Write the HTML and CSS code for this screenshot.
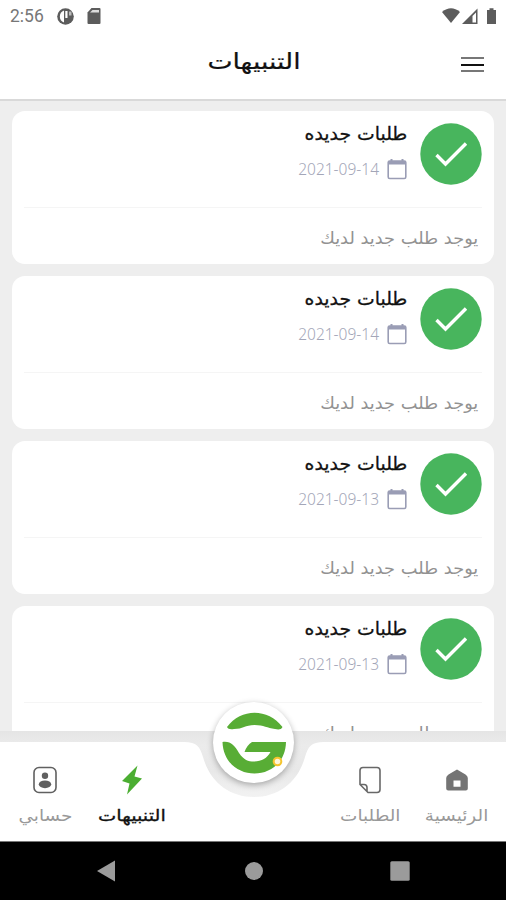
FILE: index.html
```html
<!DOCTYPE html>
<html lang="ar" dir="rtl">
  <head>
    <meta charset="UTF-8" />
    <meta name="viewport" content="width=device-width, initial-scale=1.0" />
    <title>التنبيهات</title>
    <link rel="stylesheet" href="styles.css">
  </head>
  <body>
    <!-- shared icons -->
    <svg class="defs" width="0" height="0">
      <symbol id="check" viewBox="0 0 62 62">
        <circle cx="31" cy="31" r="30.7" fill="#48b55d" />
        <path d="M16.500 32 L25.500 41 L46 20.500" fill="none" stroke="#fff" stroke-width="3.400" />
      </symbol>
      <symbol id="calendar" viewBox="0 0 20 22">
        <rect x="1.200" y="3" width="17.600" height="17.500" rx="1.500" fill="none" stroke="#9a9db5" stroke-width="1.600" />
        <path d="M1 3h18v3.500H1z M3.500 1h2v3h-2z M14.500 1h2v3h-2z" fill="#9a9db5" />
      </symbol>
    </svg>

    <div class="screen">
      <!-- status bar -->
      <div class="status" dir="ltr">
        <span class="clock">2:56</span>
        <svg class="status-app" width="17" height="17" viewBox="0 0 17 17">
          <circle cx="8.500" cy="8.500" r="8.300" fill="#5c5c5c" />
          <path d="M7 2.500C1.500 4 1.500 13 7 14.500z M8.300 3h2.200v7H8.300z" fill="#fff" />
          <path d="M12 3.500h2.500v4H12z" fill="#bbb" />
        </svg>
        <svg class="status-sd" width="14" height="16" viewBox="0 0 14 16">
          <path d="M4.500 0H12.500Q13.500 0 13.500 1V15Q13.500 16 12.500 16H1.500Q.5 16 .5 15V4.500z" fill="#5c5c5c" />
          <path d="M3 4.500 5.500 2H12v2.500z" fill="#ddd" />
        </svg>
        <svg class="status-signal" width="56" height="17" viewBox="0 0 56 17">
          <path d="M0 4Q9-3.500 18 4L9 15z" fill="#5c5c5c" />
          <path d="M20 16 35.500 .5V16z" fill="#5c5c5c" />
          <path d="M30.500 8 34 4.500V14.500H30.500z" fill="#fff" />
          <path d="M45 2h2.500V.3h4V2H54V16H45z" fill="#5c5c5c" />
        </svg>
      </div>

      <!-- header -->
      <div class="header">
        <h1>التنبيهات</h1>
        <div class="menu"><i></i><i></i><i></i></div>
      </div>

      <!-- notifications -->
      <div class="list">
        <div class="card">
          <div class="card-top">
            <svg class="check"><use href="#check" /></svg>
            <div class="info">
              <h2><span>طلبات جديده</span></h2>
              <div class="date"><svg><use href="#calendar" /></svg><span>2021-09-14</span></div>
            </div>
          </div>
          <p><span>يوجد طلب جديد لديك</span></p>
        </div>
        <div class="card">
          <div class="card-top">
            <svg class="check"><use href="#check" /></svg>
            <div class="info">
              <h2><span>طلبات جديده</span></h2>
              <div class="date"><svg><use href="#calendar" /></svg><span>2021-09-14</span></div>
            </div>
          </div>
          <p><span>يوجد طلب جديد لديك</span></p>
        </div>
        <div class="card">
          <div class="card-top">
            <svg class="check"><use href="#check" /></svg>
            <div class="info">
              <h2><span>طلبات جديده</span></h2>
              <div class="date"><svg><use href="#calendar" /></svg><span>2021-09-13</span></div>
            </div>
          </div>
          <p><span>يوجد طلب جديد لديك</span></p>
        </div>
        <div class="card">
          <div class="card-top">
            <svg class="check"><use href="#check" /></svg>
            <div class="info">
              <h2><span>طلبات جديده</span></h2>
              <div class="date"><svg><use href="#calendar" /></svg><span>2021-09-13</span></div>
            </div>
          </div>
          <p><span>يوجد طلب جديد لديك</span></p>
        </div>
      </div>

      <!-- bottom tabs -->
      <div class="tabs">
        <svg class="tabs-bg" width="506" height="110" viewBox="0 0 506 110">
          <path d="M0 11H184C197 11 200 16 203 26C210 51 229 66 254 66C279 66 298 51 305 26C308 16 311 11 324 11H506V110H0z" fill="#fff" />
        </svg>
        <div class="tab tab-home">
          <svg width="24" height="24" viewBox="0 0 24 24">
            <path d="M12 1.500 20.500 6.500Q22.800 8 22.800 10V20.500Q22.800 22.500 20.800 22.500H3.200Q1.200 22.500 1.200 20.500V10Q1.200 8 3.500 6.500z M8.500 12.500V18.800H15.500V12.500z" fill="#747474" fill-rule="evenodd" />
          </svg>
          <span>الرئيسية</span>
        </div>
        <div class="tab tab-orders">
          <svg width="24" height="28" viewBox="0 0 24 28">
            <path d="M5 1.500H19Q22 1.500 22 4.500V23.500Q22 26.500 19 26.500H10L2 18.500V4.500Q2 1.500 5 1.500z M2 18.500H6Q9 18.500 9 21.500V26" fill="none" stroke="#686868" stroke-width="1.600" />
          </svg>
          <span>الطلبات</span>
        </div>
        <div class="gap"></div>
        <div class="tab tab-alerts active">
          <svg width="22" height="30" viewBox="0 0 22 30">
            <path d="M16.500 .5 1 16 8.500 18.500 6 29.500 21 13.500 13.500 11.500z" fill="#4bae32" />
          </svg>
          <span>التنبيهات</span>
        </div>
        <div class="tab tab-account">
          <svg width="26" height="28" viewBox="0 0 26 28">
            <rect x="2" y="1.500" width="22" height="25" rx="5" fill="none" stroke="#606060" stroke-width="1.600" />
            <circle cx="13" cy="9.800" r="3.200" fill="#606060" />
            <ellipse cx="13" cy="18.300" rx="6.200" ry="3.900" fill="#606060" />
          </svg>
          <span>حسابي</span>
        </div>
        <div class="logo">
          <svg width="66" height="64" viewBox="0 0 66 64">
            <g fill="#58ad35">
              <path d="M6 16C20-3 47-3 61.500 16C60 19 57 18.500 54 18C46 17 43 14 33.500 14C24 14 22 18 13 18C9 18.500 7 18 6 16z" />
              <path d="M1.500 31C10 30 13 34 18 42C23 49 27 50.500 33 50.500C41 50.500 46 47 49.500 41H23.500Q26 34 31 31H65C64 73 3 73 1.500 31z" />
            </g>
            <circle cx="56.500" cy="50.500" r="3.800" fill="#fff6d7" stroke="#f4c42e" stroke-width="2" />
          </svg>
        </div>
      </div>

      <!-- system navigation -->
      <div class="system" dir="ltr">
        <svg width="18" height="22" viewBox="0 0 18 22"><path d="M18 .5V21.500L0 11z" /></svg>
        <svg class="home-key" width="18" height="18" viewBox="0 0 18 18"><circle cx="9" cy="9" r="9" /></svg>
        <svg width="20" height="20" viewBox="0 0 20 20"><rect x=".3" y=".3" width="19.400" height="19.400" rx="1.500" /></svg>
      </div>
    </div>
  </body>
</html>
```

FILE: styles.css
```css
* {
  margin: 0;
  padding: 0;
  box-sizing: border-box;
}

body {
  font-family: "DejaVu Sans", sans-serif;
  background-color: #fff;
  overflow: hidden;
}

.defs {
  display: block;
}

.screen {
  width: 506px;
  height: 900px;
  display: flex;
  flex-direction: column;
  overflow: hidden;
}

/* status bar */
.status {
  height: 32px;
  display: flex;
  align-items: center;
  padding: 0 8px 0 10px;
}

.clock {
  width: 47px;
  font-family: Roboto, sans-serif;
  font-size: 17.500px;
  color: #777;
}

.status-sd {
  margin-left: 13px;
}

.status-signal {
  margin-left: auto;
}

/* header */
.header {
  height: 69px;
  display: grid;
  grid-template-columns: 68px 1fr 68px;
  border-bottom: 2px solid #d9d9d9;
}

.header h1 {
  grid-column: 2;
  grid-row: 1;
  line-height: 60px;
  text-align: center;
  font-size: 22px;
  font-weight: normal;
  color: #111;
  -webkit-text-stroke: 0.2px #111;
  transform: translateX(1px) scaleX(1.21);
}

.menu {
  grid-column: 1;
  grid-row: 1;
  display: flex;
  flex-direction: column;
  gap: 4px;
  padding: 25px 22px 0 23px;
}

.menu i {
  height: 2px;
  background-color: #777;
}

.menu i:nth-child(2) {
  background-color: #111;
}

.menu i + i {
  margin-top: 0.500px;
}

/* notifications */
.list {
  height: 630px;
  display: flex;
  flex-direction: column;
  gap: 12px;
  padding: 10px 12px 0;
  background-color: #eee;
  overflow: hidden;
}

.card {
  flex: none;
  height: 153px;
  padding: 12px;
  border-radius: 13px;
  background-color: #fff;
}

.card-top {
  height: 85px;
  display: flex;
  gap: 13px;
  border-bottom: 1px solid #f5f5f5;
}

.check {
  width: 62px;
  height: 62px;
}

.info h2 {
  height: 22px;
  line-height: 22px;
  font-size: 18px;
  font-weight: normal;
  color: #111;
  -webkit-text-stroke: 0.3px #111;
}

.info h2 span,
.card p span {
  display: inline-block;
  transform: scaleX(1.045);
  transform-origin: right;
}

.date {
  display: flex;
  align-items: center;
  gap: 8px;
  height: 24px;
  margin-top: 12px;
  font-family: "Noto Sans", sans-serif;
  font-size: 15.500px;
  font-weight: 300;
  color: #a3a6b8;
}

.date svg {
  width: 20px;
  height: 22px;
}

.card p {
  padding: 0 4px;
  line-height: 60px;
  font-size: 17px;
  color: #929292;
}

/* bottom tabs */
.tabs {
  position: relative;
  height: 110px;
  display: flex;
  padding: 34px 12px 0;
  background: linear-gradient(#e5e5e5, #ebebeb 14px, #e8e8e8 40px, #f2f2f2 66px);
}

.tabs-bg {
  position: absolute;
  top: 0;
  left: 0;
}

.tab {
  position: relative;
  width: 74px;
  display: flex;
  flex-direction: column;
  align-items: center;
  font-size: 16px;
  color: #999;
}

.tab svg {
  height: 30px;
}

.tab span {
  line-height: 24px;
  margin-top: 9px;
  white-space: nowrap;
  transform: scaleX(1.15);
}

.tab-orders {
  margin-right: 13px;
}

.gap {
  flex: 1;
}

.tab-alerts {
  margin-left: 17px;
}

.tab-account {
  width: 66px;
}

.tab.active {
  color: #111;
  -webkit-text-stroke: 0.3px #111;
}

.tab.active span {
  transform: scaleX(1.21);
}

.logo {
  position: absolute;
  top: -29px;
  left: 213px;
  width: 81px;
  height: 81px;
  display: flex;
  align-items: center;
  justify-content: center;
  border-radius: 50%;
  background-color: #fff;
  box-shadow: 0 2px 6px rgba(0, 0, 0, 0.3);
}

/* system navigation */
.system {
  flex: 1;
  display: flex;
  align-items: center;
  justify-content: space-between;
  padding: 0 96px 0 97px;
  border-top: 1px solid #777;
  background-color: #000;
}

.system svg {
  fill: #9b9b9b;
}

.home-key {
  margin-left: 2px;
}
```
